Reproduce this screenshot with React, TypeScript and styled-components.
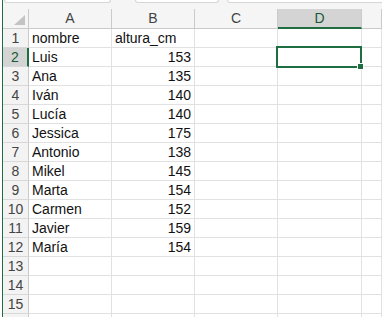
import styled, { createGlobalStyle } from "styled-components";

const excelGreen = "#1e6e42";
const gridLine = "#e1e1e1";
const headerLine = "#cacaca";

const GlobalStyle = createGlobalStyle`
  html, body {
    margin: 0;
    padding: 0;
    background: #fff;
  }
  body {
    font-family: "Liberation Sans", Arial, sans-serif;
  }
`;

const Window = styled.div`
  display: flex;
  width: 382px;
  height: 317px;
  overflow: hidden;
  background: #fff;
`;

const Gutter = styled.div`
  flex: none;
  width: 2px;
  background: #fff;
  border-right: 1px solid ${excelGreen};
`;

const Main = styled.div`
  flex: 1;
  min-width: 0;
  display: flex;
  flex-direction: column;
`;

const FormulaStrip = styled.div`
  flex: none;
  height: 9px;
  display: flex;
  align-items: flex-start;
  background: #f5f5f5;
`;

const StripBox = styled.div<{ $gap: number; $width?: number }>`
  height: 2px;
  margin-left: ${(p) => p.$gap}px;
  width: ${(p) => (p.$width ? `${p.$width}px` : "auto")};
  flex: ${(p) => (p.$width ? "none" : "1")};
  margin-right: ${(p) => (p.$width ? "0" : "-6px")};
  background: #fff;
  border: 1px solid #d6d6d6;
  border-top: none;
  border-radius: 0 0 4px 4px;
`;

const Sheet = styled.div`
  display: grid;
  grid-template-columns: 26px 83px 83px 83px 84px 1fr;
  grid-template-rows: 20px;
  grid-auto-rows: 19px;
  font-size: 14px;
`;

const Corner = styled.div`
  position: relative;
  background: #f5f5f5;
  border-right: 1px solid ${headerLine};
  border-bottom: 1px solid ${headerLine};

  &::after {
    content: "";
    position: absolute;
    right: 3px;
    bottom: 3px;
    border-left: 11px solid transparent;
    border-bottom: 10px solid #c3c3c3;
  }
`;

const ColHeader = styled.div<{ $selected?: boolean }>`
  display: flex;
  align-items: center;
  justify-content: center;
  line-height: 19px;
  background: ${(p) => (p.$selected ? "#d4d4d4" : "#f5f5f5")};
  color: ${(p) => (p.$selected ? "#145a32" : "#444")};
  border-right: 1px solid ${headerLine};
  border-bottom: ${(p) => (p.$selected ? `2px solid ${excelGreen}` : `1px solid ${headerLine}`)};
`;

const RowHeader = styled.div<{ $selected?: boolean }>`
  display: flex;
  align-items: flex-end;
  justify-content: center;
  line-height: 17px;
  background: ${(p) => (p.$selected ? "#d4d4d4" : "#f3f3f3")};
  color: ${(p) => (p.$selected ? "#145a32" : "#444")};
  border-right: ${(p) => (p.$selected ? `2px solid ${excelGreen}` : `1px solid ${headerLine}`)};
  border-bottom: 1px solid #d8d8d8;
`;

const Cell = styled.div<{ $align?: "left" | "right"; $active?: boolean }>`
  position: relative;
  display: flex;
  align-items: flex-end;
  justify-content: ${(p) => (p.$align === "right" ? "flex-end" : "flex-start")};
  padding: 0 3px 0 3px;
  line-height: 17px;
  color: #111;
  white-space: nowrap;
  border-right: 1px solid ${gridLine};
  border-bottom: 1px solid ${gridLine};
  z-index: ${(p) => (p.$active ? 2 : "auto")};

  ${(p) =>
    p.$active &&
    `
    &::before {
      content: "";
      position: absolute;
      top: -2px;
      left: -2px;
      right: -1px;
      bottom: -2px;
      border: 2px solid ${excelGreen};
    }
    &::after {
      content: "";
      position: absolute;
      right: -3px;
      bottom: -4px;
      width: 5px;
      height: 5px;
      background: ${excelGreen};
      border: 1px solid #fff;
    }
  `}
`;

const columns = ["A", "B", "C", "D", ""];

const rows: [string, string][] = [
  ["nombre", "altura_cm"],
  ["Luis", "153"],
  ["Ana", "135"],
  ["Iván", "140"],
  ["Lucía", "140"],
  ["Jessica", "175"],
  ["Antonio", "138"],
  ["Mikel", "145"],
  ["Marta", "154"],
  ["Carmen", "152"],
  ["Javier", "159"],
  ["María", "154"],
  ["", ""],
  ["", ""],
  ["", ""],
  ["", ""],
];

const activeRow = 2;
const activeCol = "D";
// the last row only peeks in at the bottom edge, its number is out of view
const visibleRows = 15;

export default function App() {
  return (
    <>
      <GlobalStyle />
      <Window>
        <Gutter />
        <Main>
          <FormulaStrip>
            <StripBox $gap={1} $width={105} />
            <StripBox $gap={24} $width={82} />
            <StripBox $gap={8} />
          </FormulaStrip>
          <Sheet>
            <Corner />
            {columns.map((c, i) => (
              <ColHeader key={i} $selected={c === activeCol}>
                {c}
              </ColHeader>
            ))}
            {rows.map(([name, height], r) => {
              const n = r + 1;
              return [
                <RowHeader key={`h${n}`} $selected={n === activeRow}>
                  {n <= visibleRows ? n : ""}
                </RowHeader>,
                <Cell key={`a${n}`}>{name}</Cell>,
                <Cell key={`b${n}`} $align={n === 1 ? "left" : "right"}>
                  {height}
                </Cell>,
                <Cell key={`c${n}`} />,
                <Cell key={`d${n}`} $active={n === activeRow} />,
                <Cell key={`e${n}`} />,
              ];
            })}
          </Sheet>
        </Main>
      </Window>
    </>
  );
}
